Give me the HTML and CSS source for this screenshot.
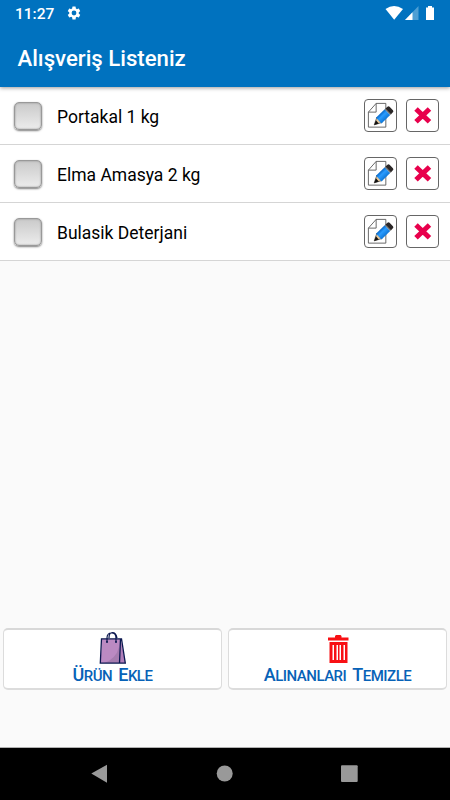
FILE: index.html
```html
<!DOCTYPE html>
<html lang="en">
<head>
<meta charset="utf-8">
<title>Alışveriş Listeniz</title>
<link rel="stylesheet" href="styles.css">
</head>
<body>
<svg width="0" height="0" class="defs">
  <defs>
    <linearGradient id="blue" x1="0" y1="0" x2="1" y2="0"><stop offset="0" stop-color="#0868c8"/><stop offset=".4" stop-color="#2a9cff"/><stop offset="1" stop-color="#1078d8"/></linearGradient>
    <symbol id="edit" viewBox="0 0 32 32">
      <path d="M11.500 3.500H21.500V28H3.500V12.500Z M11.500 3.500V12.500H3.500" fill="#fff" stroke="#555" stroke-width=".9"/>
      <g transform="translate(9.500 25.700) rotate(46)">
        <path d="M0 0L-3.800-7.500H3.800Z" fill="#e9c99b" stroke="#333" stroke-width=".6"/>
        <path d="M0 0L-2.200-4.500H2.200Z" fill="#111"/>
        <path d="M-4.100-6.500H4.100V-19H-4.100Z" fill="url(#blue)"/>
        <path d="M-4.100-19H4.100V-20.500H-4.100Z" fill="#777"/>
        <path d="M-4.100-20.200H4.100V-22.500Q4.100-24.500 2.500-24.500H-2.500Q-4.100-24.500-4.100-22.500Z" fill="#2b2727"/>
      </g>
    </symbol>
    <symbol id="remove" viewBox="0 0 32 32">
      <path d="M9.300 9.300L23.200 22.500M23.200 9.300L9.300 22.500" stroke="#e8004c" stroke-width="5.200"/>
    </symbol>
  </defs>
</svg>
<header class="header">
  <div class="status">
    <span class="clock">11:27</span>
    <svg class="gear" viewBox="0 0 24 24"><path fill="#fff" d="M19.140 12.940c.04-.3.060-.61.060-.94s-.02-.64-.07-.94l2.030-1.580a.49.490 0 0 0 .12-.61l-1.920-3.320a.49.490 0 0 0-.59-.22l-2.390.96a7 7 0 0 0-1.620-.94l-.36-2.540a.48.480 0 0 0-.48-.41h-3.840a.48.480 0 0 0-.47.410l-.36 2.540a7 7 0 0 0-1.620.94l-2.390-.96a.48.480 0 0 0-.59.220L2.740 8.870a.48.480 0 0 0 .12.610l2.030 1.580a6 6 0 0 0 0 1.880l-2.030 1.580a.49.490 0 0 0-.12.610l1.920 3.320c.12.220.37.290.59.220l2.390-.96c.5.380 1.030.7 1.620.94l.36 2.540c.05.240.24.410.48.410h3.840c.24 0 .44-.17.470-.41l.36-2.540a7 7 0 0 0 1.620-.94l2.390.96c.22.080.47 0 .59-.22l1.920-3.320a.49.490 0 0 0-.12-.61zM12 15.600a3.600 3.600 0 1 1 0-7.200 3.600 3.600 0 0 1 0 7.200z"/></svg>
    <svg class="signals" viewBox="0 0 50 16"><path d="M-.5 3Q8-3 17 3L8.200 13.800Z" fill="#fff"/><path d="M19 14L32.500 0V14Z" fill="#4d9fd4"/><path d="M19 14L26.500 6.300V14Z" fill="#fff"/><path d="M40 1.500H42V0H46V1.500H48V14H40Z" fill="#fff"/></svg>
  </div>
  <h1 class="title">Alışveriş Listeniz</h1>
</header>
<main class="content">
  <ul class="list">
    <li class="item"><span class="check"></span><span class="name">Portakal 1 kg</span><button class="tool"><svg><use href="#edit"/></svg></button><button class="tool"><svg><use href="#remove"/></svg></button></li>
    <li class="item"><span class="check"></span><span class="name">Elma Amasya 2 kg</span><button class="tool"><svg><use href="#edit"/></svg></button><button class="tool"><svg><use href="#remove"/></svg></button></li>
    <li class="item"><span class="check"></span><span class="name">Bulasik Deterjani</span><button class="tool"><svg><use href="#edit"/></svg></button><button class="tool"><svg><use href="#remove"/></svg></button></li>
  </ul>
  <div class="actions">
    <button class="action">
      <svg class="action-icon" viewBox="0 0 32 34"><path d="M5 8H23.500L28 32H3.500Z" fill="#bb8ac2"/><path d="M22 16V32H7Q19 28 22 16Z" fill="#a67caf"/><path d="M23.500 8L28.300 32H22.500Z" fill="#b07eb9"/><path d="M4.500 7.800H24.500L28.300 32.200H3.300ZM23.500 8L22.500 32" fill="none" stroke="#0b174f" stroke-width="1.300"/><path d="M10 11V7Q10 2 14.500 2T19 7V11M12 7Q12 1.500 15.500 1.500T20 7" fill="none" stroke="#0b174f" stroke-width="1.200"/><circle cx="10" cy="11" r="1" fill="#0b174f"/><circle cx="19" cy="11" r="1" fill="#0b174f"/></svg>
      <span class="label"><span class="word">Ürün</span> <span class="word">Ekle</span></span>
    </button>
    <button class="action">
      <svg class="action-icon" viewBox="0 0 32 34"><path d="M6 6.500H13V5L14 4H18.500L19.500 5V6.500H26.500V9.500H6ZM7.500 11H25.500V32H7.500ZM10.500 14V29H12V14ZM14.500 14V29H16V14ZM17.500 14V29H19V14ZM21.500 14V29H23V14Z" fill="#f81014" fill-rule="evenodd"/></svg>
      <span class="label"><span class="word">Alınanları</span> <span class="word">Temizle</span></span>
    </button>
  </div>
</main>
<nav class="nav">
  <svg viewBox="0 0 450 52"><g fill="#999"><path d="M91.300 25.500L107 16.700V34.700Z"/><circle cx="224.700" cy="25.500" r="8"/><rect x="341" y="17.200" width="16.700" height="16.700" rx="1"/></g></svg>
</nav>
</body>
</html>
```
FILE: styles.css
```css
* { box-sizing: border-box; }
body {
  margin: 0;
  width: 450px;
  height: 800px;
  display: flex;
  flex-direction: column;
  overflow: hidden;
  background: #fafafa;
  font-family: Roboto, sans-serif;
  color: #000;
}
.defs { position: absolute; }
button { padding: 0; font: inherit; background: #fff; }
.header {
  height: 87px;
  flex: none;
  background: #0072bf;
  color: #fff;
  box-shadow: 0 1px 4px rgba(0, 0, 0, .4);
  z-index: 1;
}
.status {
  height: 28px;
  display: flex;
  align-items: center;
  padding: 0 14px 0 15px;
}
.clock { font-size: 15.500px; font-weight: 500; line-height: 28px; width: 51px; }
.gear { width: 16px; height: 16px; margin-bottom: 2px; }
.signals { width: 50px; height: 16px; margin-left: auto; overflow: visible; }
.title {
  margin: 0;
  padding-left: 17.500px;
  font-size: 22.200px;
  font-weight: 500;
  line-height: 60px;
}
.content { flex: 1; display: flex; flex-direction: column; }
.list { list-style: none; margin: 0; padding: 0; }
.item {
  height: 58px;
  display: flex;
  align-items: center;
  padding: 0 11px 0 14px;
  background: #fff;
  border-bottom: 1px solid #d5d5d5;
}
.check {
  width: 28px;
  height: 28px;
  border: 1px solid #999;
  border-radius: 5px;
  background: linear-gradient(#cacaca, #ececec);
  box-shadow: inset 0 0 2px #888, 0 1px 2px rgba(0, 0, 0, .5);
}
.name { flex: 1; margin-left: 15px; padding-top: 2px; font-size: 17.500px; }
.tool {
  width: 33px;
  height: 33px;
  margin-left: 9px;
  border: 1px solid #666;
  border-radius: 4px;
}
.tool svg { display: block; width: 31px; height: 31px; }
.actions {
  display: flex;
  gap: 6px;
  margin-top: auto;
  padding: 0 3px 57px;
}
.action {
  flex: 1;
  height: 62px;
  display: flex;
  flex-direction: column;
  align-items: center;
  border: 1px solid #dcdcdc;
  border-top: 2px solid #d8d8d8;
  border-bottom-width: 2px;
  border-radius: 5px;
}
.action-icon { width: 32px; height: 34px; margin-top: 1px; flex: none; }
.label {
  display: flex;
  gap: 6px;
  margin-top: -1px;
  font-size: 15px;
  font-weight: 500;
  line-height: 22px;
  color: #0762b7;
  white-space: nowrap;
}
.word { display: block; text-transform: uppercase; letter-spacing: -.5px; }
.word::first-letter { font-size: 18px; }
.nav { height: 53px; border-top: 1px solid #b0b0b0; background: #000; flex: none; }
.nav svg { display: block; width: 450px; height: 52px; }
```
